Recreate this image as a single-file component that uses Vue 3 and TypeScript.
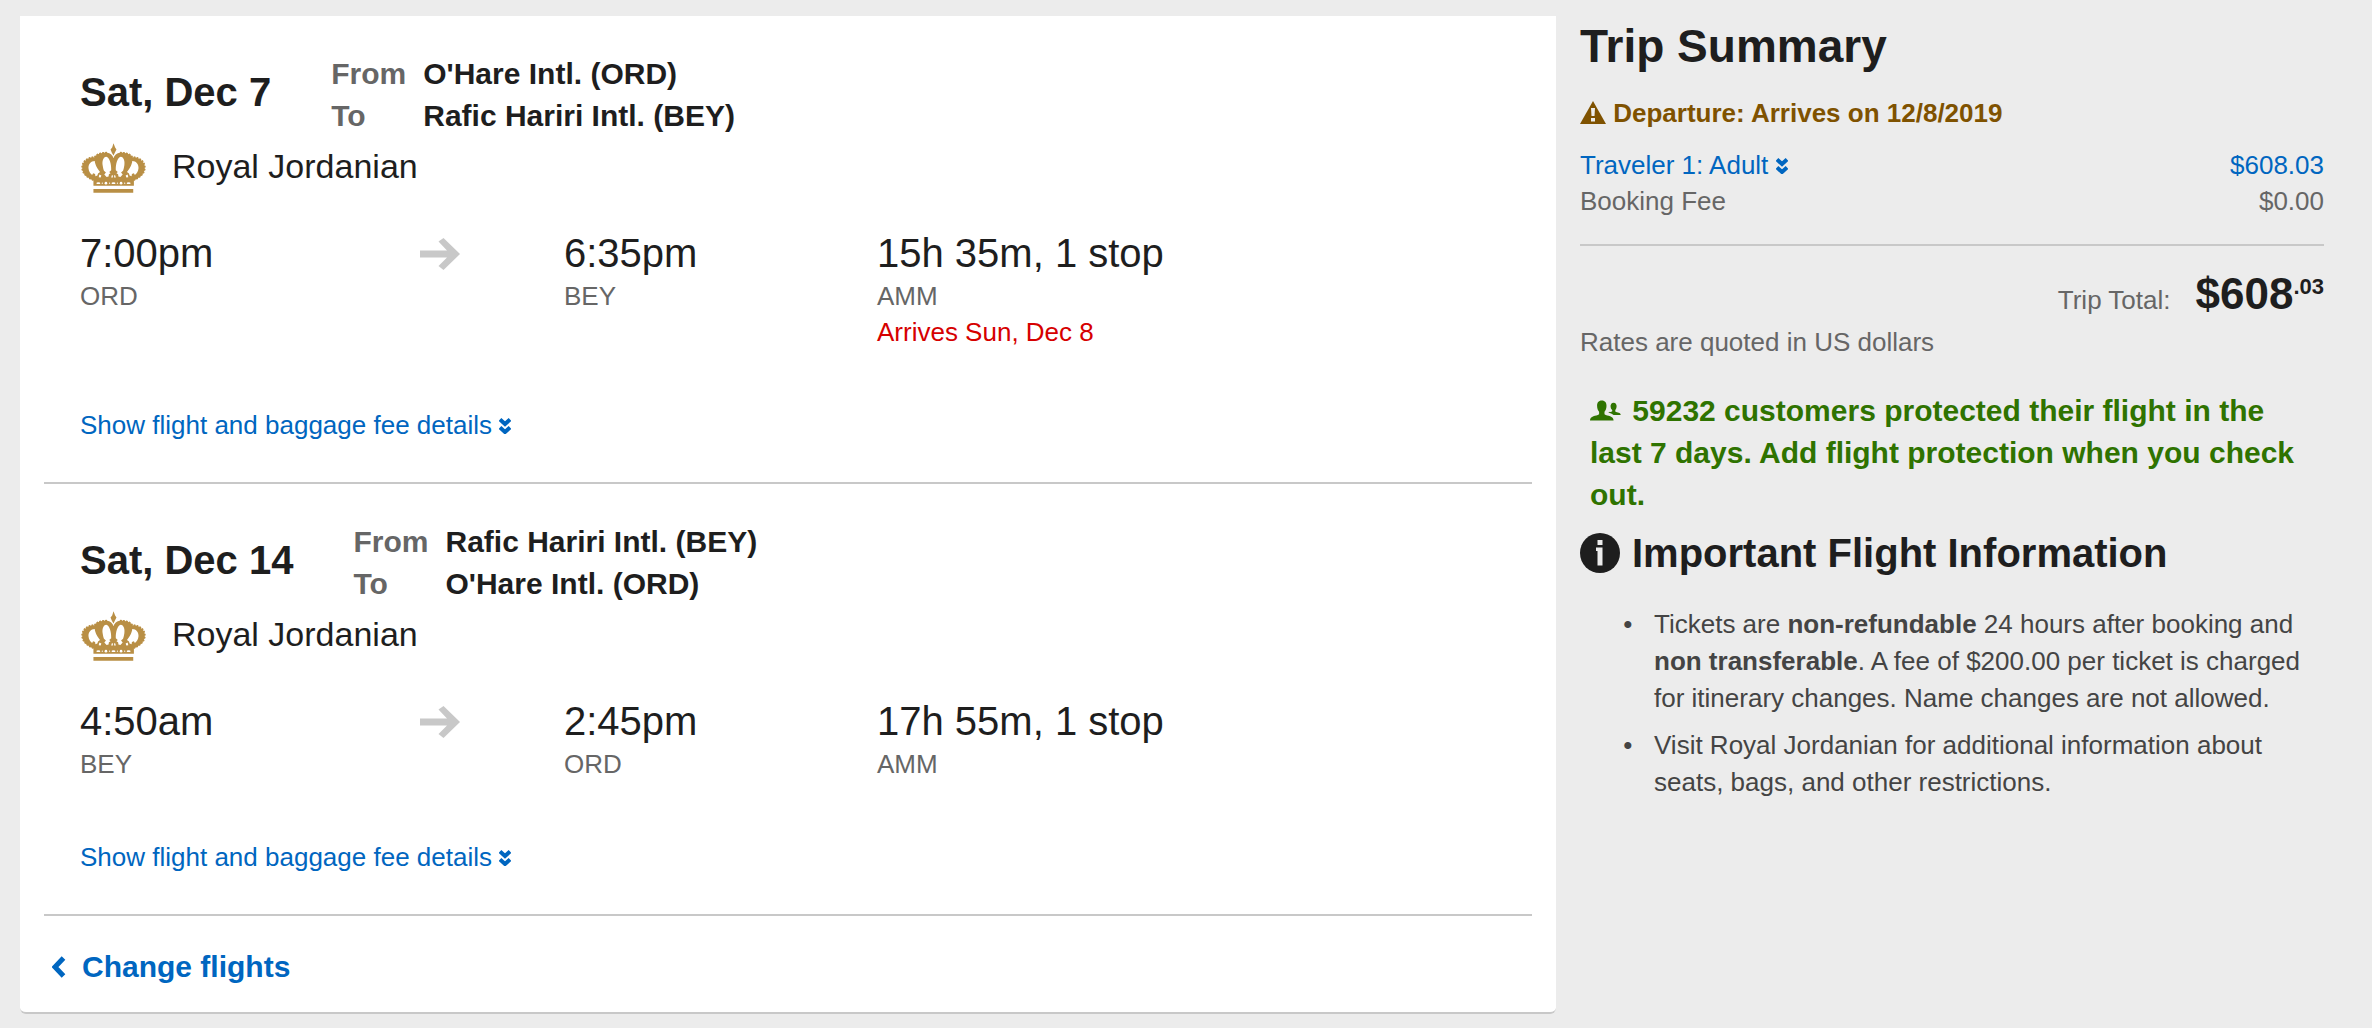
<script setup lang="ts">
interface Flight {
  date: string
  from: string
  to: string
  airline: string
  departTime: string
  departCode: string
  arriveTime: string
  arriveCode: string
  duration: string
  via: string
  note?: string
}

const flights: Flight[] = [
  {
    date: 'Sat, Dec 7',
    from: "O'Hare Intl. (ORD)",
    to: 'Rafic Hariri Intl. (BEY)',
    airline: 'Royal Jordanian',
    departTime: '7:00pm',
    departCode: 'ORD',
    arriveTime: '6:35pm',
    arriveCode: 'BEY',
    duration: '15h 35m, 1 stop',
    via: 'AMM',
    note: 'Arrives Sun, Dec 8',
  },
  {
    date: 'Sat, Dec 14',
    from: 'Rafic Hariri Intl. (BEY)',
    to: "O'Hare Intl. (ORD)",
    airline: 'Royal Jordanian',
    departTime: '4:50am',
    departCode: 'BEY',
    arriveTime: '2:45pm',
    arriveCode: 'ORD',
    duration: '17h 55m, 1 stop',
    via: 'AMM',
  },
]
</script>

<template>
  <div class="page">
    <main class="card">
      <section v-for="flight in flights" :key="flight.date" class="flight">
        <header class="flight-head">
          <h2 class="date">{{ flight.date }}</h2>
          <dl class="route">
            <dt>From</dt>
            <dd>{{ flight.from }}</dd>
            <dt>To</dt>
            <dd>{{ flight.to }}</dd>
          </dl>
        </header>

        <div class="airline">
          <svg class="crown" viewBox="62 38 200 152" aria-hidden="true">
            <g fill="#b98f45">
              <path d="M162 39L167 52L171 58L166 68L162 76L157 68L153 58L158 52Z" />
              <path d="M101 168V151C82 144 67 130 67 113C67 93 84 82 105 81C112 70 130 67 142 68C152 69 160 76 162 84C164 76 172 69 182 68C194 67 212 70 219 81C240 82 257 93 257 113C257 130 242 144 224 151V168Z" />
              <path d="M101 178H222V189H101Z" />
            </g>
            <path
              d="M99 150C82 142 67 130 67 113C67 93 84 82 105 81C112 70 130 67 142 68M225 150C242 142 257 130 257 113C257 93 240 82 219 81C212 70 194 67 182 68"
              fill="none" stroke="#b98f45" stroke-width="6" stroke-linecap="round" stroke-dasharray="1 8"
            />
            <g fill="#fff">
              <path d="M105 93C93 93 85 104 86 115C87 125 91 131 97 135L100 130L106 132L107 139L113 137L115 131L121 126C115 119 109 110 107 102C106 99 105 96 105 93Z" />
              <path d="M219 93C231 93 239 104 238 115C237 125 233 131 227 135L224 130L218 132L217 139L211 137L209 131L203 126C209 119 215 110 217 102C218 99 219 96 219 93Z" />
              <path d="M140 80C131 81 127 92 129 106C130 113 131 118 133 122L139 128L134 134L141 141L147 140L148 133L153 130L149 126L155 121C156 104 150 81 140 80Z" />
              <path d="M184 80C193 81 197 92 195 106C194 113 193 118 191 122L185 128L190 134L183 141L177 140L176 133L171 130L175 126L169 121C168 104 174 81 184 80Z" />
              <path d="M119 134L125 137L123 143L117 142ZM205 134L199 137L201 143L207 142ZM157 136H160V143H155ZM167 136H164V143H169Z" />
              <ellipse cx="116" cy="160" rx="6" ry="3" />
              <ellipse cx="139" cy="160" rx="4" ry="4" />
              <ellipse cx="162" cy="160" rx="6" ry="3" />
              <ellipse cx="185" cy="160" rx="4" ry="4" />
              <ellipse cx="208" cy="160" rx="6" ry="3" />
              <circle cx="128" cy="160" r="2" />
              <circle cx="150" cy="160" r="2" />
              <circle cx="174" cy="160" r="2" />
              <circle cx="196" cy="160" r="2" />
            </g>
          </svg>
          <span class="airline-name">{{ flight.airline }}</span>
        </div>

        <div class="legs">
          <div class="stop">
            <div class="big">{{ flight.departTime }}</div>
            <div class="code">{{ flight.departCode }}</div>
          </div>
          <svg class="arrow" viewBox="0 0 40 32" aria-hidden="true">
            <path d="M0 12.500H27L18.500 3.500L23.500 0L40 16L23.500 32L18.500 28L27 19.500H0Z" fill="#c8c8c8" />
          </svg>
          <div class="stop">
            <div class="big">{{ flight.arriveTime }}</div>
            <div class="code">{{ flight.arriveCode }}</div>
          </div>
          <div class="stop">
            <div class="big">{{ flight.duration }}</div>
            <div class="code">{{ flight.via }}</div>
            <div v-if="flight.note" class="note">{{ flight.note }}</div>
          </div>
        </div>

        <a class="details" href="#">
          Show flight and baggage fee details
          <svg class="chevrons" viewBox="0 0 12 16" aria-hidden="true">
            <path d="M1 1.500L6 6L11 1.500M1 9.500L6 14L11 9.500" />
          </svg>
        </a>
      </section>

      <a class="change" href="#">
        <svg class="back" viewBox="0 0 14 22" aria-hidden="true">
          <path d="M11.500 2L3 11L11.500 20" fill="none" stroke="#0066c0" stroke-width="5" />
        </svg>
        Change flights
      </a>
    </main>

    <aside class="summary">
      <h1>Trip Summary</h1>
      <p class="warning">
        <svg class="warning-icon" viewBox="0 0 26 23" aria-hidden="true">
          <path d="M13 0L26 23H0Z" fill="#7f5200" />
          <path d="M11 7H15L14.500 15H11.500ZM11 17H15V20.500H11Z" fill="#ececec" />
        </svg>
        Departure: Arrives on 12/8/2019
      </p>

      <a class="row traveler" href="#">
        <span>
          Traveler 1: Adult
          <svg class="chevrons" viewBox="0 0 12 16" aria-hidden="true">
            <path d="M1 1.500L6 6L11 1.500M1 9.500L6 14L11 9.500" />
          </svg>
        </span>
        <span>$608.03</span>
      </a>
      <div class="row">
        <span>Booking Fee</span>
        <span>$0.00</span>
      </div>

      <div class="total">
        <span>Trip Total:</span>
        <strong class="amount">$608<sup>.03</sup></strong>
      </div>
      <p class="rates">Rates are quoted in US dollars</p>

      <p class="protect">
        <svg class="people" viewBox="62 44 92 62" aria-hidden="true">
          <g fill="#2f7300">
            <path d="M97 45C107 45 111 52 111 61C111 70 108 75 105 79V86C114 92 132 90 132 105H62C62 90 80 92 89 86V79C86 75 83 70 83 61C83 52 87 45 97 45Z" />
            <path d="M132 52C138 52 141 57 141 62C141 68 139 71 137 74V78C143 82 153 80 153 88H132C128 85 122 83 116 80C120 79 125 80 128 77V74C125 71 123 68 123 62C123 57 126 52 132 52Z" />
          </g>
        </svg>
        59232 customers protected their flight in the last 7 days. Add flight protection when you check out.
      </p>

      <h2 class="info-title">
        <svg class="info" viewBox="0 0 40 40" aria-hidden="true">
          <circle cx="20" cy="20" r="20" fill="#1e1e1e" />
          <path d="M17.500 7H22.500V12H17.500ZM16 14.500H22.500V32.500H17.500V18H16Z" fill="#ececec" />
        </svg>
        Important Flight Information
      </h2>
      <ul>
        <li>
          Tickets are <b>non-refundable</b> 24 hours after booking and <b>non transferable</b>. A fee of $200.00 per
          ticket is charged for itinerary changes. Name changes are not allowed.
        </li>
        <li>Visit Royal Jordanian for additional information about seats, bags, and other restrictions.</li>
      </ul>
    </aside>
  </div>
</template>

<style>
body {
  margin: 0;
  background: #ececec;
}
</style>

<style scoped>
.page {
  display: grid;
  grid-template-columns: 64fr 31fr;
  gap: 24px;
  align-items: start;
  padding: 16px 48px 14px 20px;
  color: #1e1e1e;
  font-family: "Liberation Sans", Arial, sans-serif;
  font-size: 26px;
  line-height: 36px;
}

h1,
h2,
p,
dl,
dd,
ul {
  margin: 0;
}

a {
  color: #0066c0;
  text-decoration: none;
}

.card {
  padding: 0 24px 24px;
  background: #fff;
  border-bottom: 2px solid #c8c8c8;
  border-radius: 0 0 6px 6px;
}

.flight {
  padding: 37px 36px 39px;
  border-bottom: 2px solid #c8c8c8;
}

.flight-head {
  display: flex;
  gap: 60px;
}

.date {
  font-size: 40px;
  line-height: 78px;
}

.route {
  display: grid;
  grid-template-columns: auto auto;
  column-gap: 17px;
  font-size: 30px;
  font-weight: bold;
  line-height: 42px;
}

.route dt {
  color: #666;
}

.airline {
  display: flex;
  gap: 25px;
  margin-top: 6px;
}

.crown {
  width: 67px;
  height: 50px;
}

.airline-name {
  font-size: 34px;
  line-height: 46px;
}

.legs {
  display: grid;
  grid-template-columns: 340fr 144fr 313fr 619fr;
  margin: 35px 0 57px;
}

.big {
  font-size: 40px;
  line-height: 50px;
}

.code {
  color: #666;
}

.note {
  color: #d60000;
}

.arrow {
  width: 40px;
  height: 32px;
  margin-top: 10px;
}

.details {
  display: block;
}

.chevrons {
  width: 12px;
  height: 16px;
  fill: none;
  stroke: #0066c0;
  stroke-width: 4;
}

.change {
  display: flex;
  align-items: center;
  gap: 16px;
  margin: 30px 8px 0;
  font-size: 30px;
  font-weight: bold;
  line-height: 42px;
}

.back {
  width: 14px;
  height: 22px;
}

h1 {
  font-size: 46px;
  line-height: 60px;
}

.warning {
  margin: 19px 0 16px;
  color: #7f5200;
  font-weight: bold;
}

.warning-icon {
  width: 26px;
  height: 23px;
  vertical-align: -2px;
}

.row {
  display: flex;
  justify-content: space-between;
  color: #666;
}

.traveler {
  color: #0066c0;
}

.total {
  display: flex;
  justify-content: flex-end;
  align-items: baseline;
  gap: 25px;
  margin-top: 25px;
  padding-top: 23px;
  border-top: 2px solid #c8c8c8;
  color: #666;
}

.amount {
  color: #1e1e1e;
  font-size: 44px;
  line-height: 50px;
}

.amount sup {
  font-size: 22px;
  line-height: 22px;
  vertical-align: 15px;
}

.rates {
  margin-top: 5px;
  color: #666;
}

.protect {
  margin: 30px 10px 13px;
  color: #2f7300;
  font-size: 30px;
  font-weight: bold;
  line-height: 42px;
}

.people {
  width: 31px;
  height: 21px;
  margin-right: 3px;
}

.info-title {
  display: flex;
  align-items: center;
  gap: 12px;
  font-size: 40px;
  line-height: 48px;
}

.info {
  width: 40px;
  height: 40px;
}

ul {
  margin-top: 29px;
  padding-left: 74px;
  color: #444;
  line-height: 37px;
  list-style-type: "•\00a0\00a0\00a0";
}

li + li {
  margin-top: 10px;
}
</style>
